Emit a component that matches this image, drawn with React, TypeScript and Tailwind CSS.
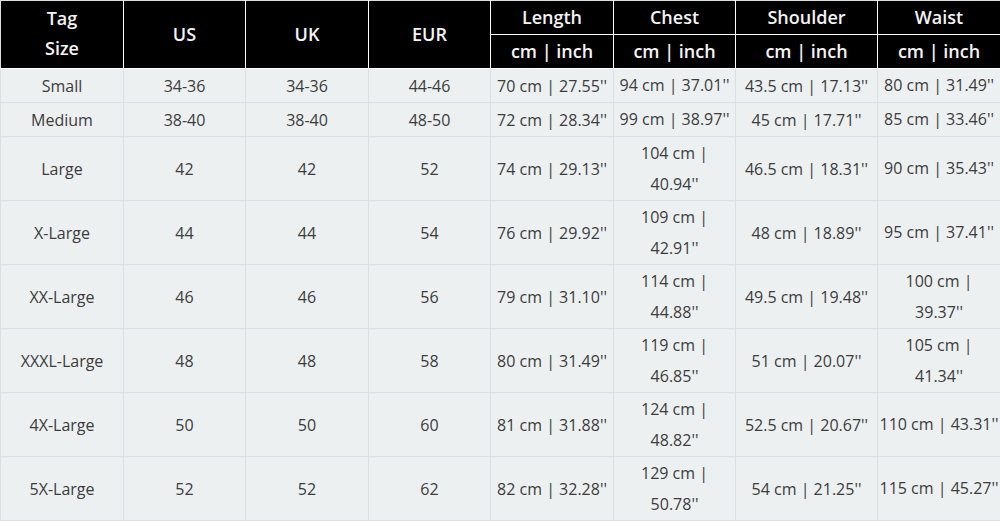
import React from 'react';

type Row = {
  tag: string;
  us: string;
  uk: string;
  eur: string;
  length: string;
  chest: string[];
  shoulder: string;
  waist: string[];
};

const rows: Row[] = [
  { tag: 'Small', us: '34-36', uk: '34-36', eur: '44-46', length: "70 cm | 27.55''", chest: ["94 cm | 37.01''"], shoulder: "43.5 cm | 17.13''", waist: ["80 cm | 31.49''"] },
  { tag: 'Medium', us: '38-40', uk: '38-40', eur: '48-50', length: "72 cm | 28.34''", chest: ["99 cm | 38.97''"], shoulder: "45 cm | 17.71''", waist: ["85 cm | 33.46''"] },
  { tag: 'Large', us: '42', uk: '42', eur: '52', length: "74 cm | 29.13''", chest: ['104 cm |', "40.94''"], shoulder: "46.5 cm | 18.31''", waist: ["90 cm | 35.43''"] },
  { tag: 'X-Large', us: '44', uk: '44', eur: '54', length: "76 cm | 29.92''", chest: ['109 cm |', "42.91''"], shoulder: "48 cm | 18.89''", waist: ["95 cm | 37.41''"] },
  { tag: 'XX-Large', us: '46', uk: '46', eur: '56', length: "79 cm | 31.10''", chest: ['114 cm |', "44.88''"], shoulder: "49.5 cm | 19.48''", waist: ['100 cm |', "39.37''"] },
  { tag: 'XXXL-Large', us: '48', uk: '48', eur: '58', length: "80 cm | 31.49''", chest: ['119 cm |', "46.85''"], shoulder: "51 cm | 20.07''", waist: ['105 cm |', "41.34''"] },
  { tag: '4X-Large', us: '50', uk: '50', eur: '60', length: "81 cm | 31.88''", chest: ['124 cm |', "48.82''"], shoulder: "52.5 cm | 20.67''", waist: ["110 cm | 43.31''"] },
  { tag: '5X-Large', us: '52', uk: '52', eur: '62', length: "82 cm | 32.28''", chest: ['129 cm |', "50.78''"], shoulder: "54 cm | 21.25''", waist: ["115 cm | 45.27''"] },
];

const td = 'border border-[#dcdfe1] text-center align-middle p-0 whitespace-nowrap';
const th = 'border border-white bg-black text-[#f4f4f4] font-semibold text-[18px] text-center align-middle p-0';

function Lines({ parts }: { parts: string[] }) {
  return (
    <>
      {parts.map((p, i) => (
        <div key={i} className="leading-[31px]">{p}</div>
      ))}
    </>
  );
}

export default function App() {
  return (
    <div className="w-[1000px] h-[523px] bg-white overflow-hidden" style={{ fontFamily: '"Open Sans", Lato, sans-serif' }}>
      <table className="w-[1000px] table-fixed border-collapse border border-[#dcdfe1] text-[16px] text-[#3c3c3c]">
        <colgroup>
          <col className="w-[123px]" />
          <col className="w-[122px]" />
          <col className="w-[123px]" />
          <col className="w-[122px]" />
          <col className="w-[123px]" />
          <col className="w-[122px]" />
          <col className="w-[142px]" />
          <col className="w-[123px]" />
        </colgroup>
        <thead>
          <tr className="h-[34px]">
            <th rowSpan={2} className={`${th} leading-[30px] pb-[4px] border-l-[#dcdfe1] border-t-[#dcdfe1]`}>
              Tag<br />Size
            </th>
            <th rowSpan={2} className={`${th} border-t-[#dcdfe1]`}>US</th>
            <th rowSpan={2} className={`${th} border-t-[#dcdfe1]`}>UK</th>
            <th rowSpan={2} className={`${th} border-t-[#dcdfe1]`}>EUR</th>
            <th className={`${th} border-t-[#dcdfe1]`}>Length</th>
            <th className={`${th} border-t-[#dcdfe1]`}>Chest</th>
            <th className={`${th} border-t-[#dcdfe1]`}>Shoulder</th>
            <th className={`${th} border-t-[#dcdfe1] border-r-[#dcdfe1]`}>Waist</th>
          </tr>
          <tr className="h-[34px]">
            <th className={th}>cm | inch</th>
            <th className={th}>cm | inch</th>
            <th className={th}>cm | inch</th>
            <th className={`${th} border-r-[#dcdfe1]`}>cm | inch</th>
          </tr>
        </thead>
        <tbody className="bg-[#edf0f1]">
          {rows.map((r) => {
            const tall = r.chest.length > 1;
            return (
              <tr key={r.tag} className={tall ? 'h-[64px]' : 'h-[34px]'}>
                <td className={td}>{r.tag}</td>
                <td className={td}>{r.us}</td>
                <td className={td}>{r.uk}</td>
                <td className={td}>{r.eur}</td>
                <td className={td}>{r.length}</td>
                <td className={td}><Lines parts={r.chest} /></td>
                <td className={td}>{r.shoulder}</td>
                <td className={td}><Lines parts={r.waist} /></td>
              </tr>
            );
          })}
        </tbody>
      </table>
    </div>
  );
}
